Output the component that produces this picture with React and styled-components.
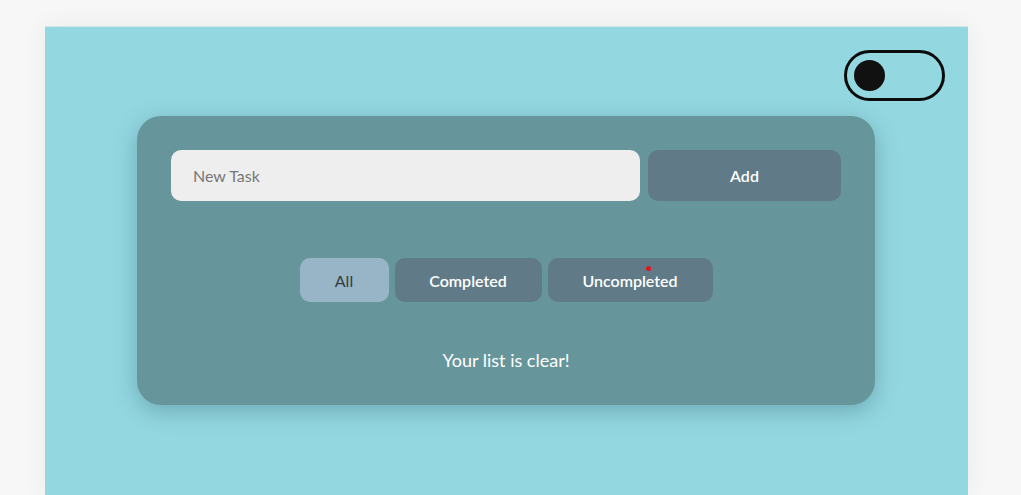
import React, { useState } from 'react'
import styled, { createGlobalStyle } from 'styled-components'

const GlobalStyle = createGlobalStyle`
  * {
    box-sizing: border-box;
  }
  body {
    margin: 0;
    background: #f7f7f7;
    font-family: Lato, 'Noto Sans', sans-serif;
  }
`

const Page = styled.main`
  width: 923px;
  min-height: 469px;
  margin: 26px 0 0 45px;
  background: #93d7e1;
  box-shadow: 0 0 24px rgba(0, 0, 0, 0.06);
  border-top: 1px solid #d4e6ea;
  display: flex;
  flex-direction: column;
`

const TopBar = styled.div`
  display: flex;
  justify-content: flex-end;
  padding: 23px 23px 0;
`

const Toggle = styled.button`
  width: 101px;
  height: 51px;
  border: 3px solid #0b0b0b;
  border-radius: 26px;
  background: transparent;
  padding: 0 0 0 7px;
  display: flex;
  align-items: center;
  justify-content: ${(p) => (p.$on ? 'flex-end' : 'flex-start')};
  cursor: pointer;
`

const Knob = styled.span`
  width: 31px;
  height: 31px;
  border-radius: 50%;
  background: #111;
`

const Card = styled.section`
  width: 738px;
  margin: 15px 0 0 92px;
  padding: 34px 34px 33px;
  background: #66969b;
  border-radius: 24px;
  box-shadow: 0 6px 22px rgba(40, 90, 100, 0.35);
  display: flex;
  flex-direction: column;
  align-items: center;
`

const Form = styled.form`
  align-self: stretch;
  display: flex;
  gap: 8px;
`

const Input = styled.input`
  width: 469px;
  height: 51px;
  border: none;
  border-radius: 10px;
  background: #eeeeee;
  padding: 0 22px;
  font-family: inherit;
  font-size: 16px;
  color: #333;
  outline: none;

  &::placeholder {
    color: #777;
  }
`

const Button = styled.button`
  width: ${(p) => (p.$w ? `${p.$w}px` : 'auto')};
  height: ${(p) => p.$h || 44}px;
  padding: 0;
  border: none;
  border-radius: 10px;
  background: ${(p) => (p.$active ? '#97b5c6' : '#607b87')};
  color: ${(p) => (p.$active ? '#333c40' : '#ffffff')};
  font-family: inherit;
  font-size: 16px;
  font-weight: ${(p) => (p.$active ? 400 : 600)};
  cursor: pointer;
  position: relative;
`

const AddButton = styled(Button)`
  flex: 1;
`

const Filters = styled.div`
  display: flex;
  gap: 6px;
  margin-top: 57px;
`

const Dot = styled.span`
  position: absolute;
  top: 8px;
  left: 98px;
  width: 5px;
  height: 5px;
  border-radius: 50%;
  background: #e0141e;
`

const Empty = styled.p`
  margin: 46px 0 0;
  line-height: 24px;
  font-size: 18px;
  color: #ffffff;
`

const filters = [
  { key: 'all', label: 'All', width: 89 },
  { key: 'completed', label: 'Completed', width: 147 },
  { key: 'uncompleted', label: 'Uncompleted', width: 165, dot: true },
]

export default function App() {
  const [dark, setDark] = useState(false)
  const [filter, setFilter] = useState('all')

  return (
    <>
      <GlobalStyle />
      <Page>
        <TopBar>
          <Toggle $on={dark} onClick={() => setDark(!dark)} aria-label="toggle theme">
            <Knob />
          </Toggle>
        </TopBar>
        <Card>
          <Form onSubmit={(e) => e.preventDefault()}>
            <Input placeholder="New Task" />
            <AddButton type="submit" $h={51}>Add</AddButton>
          </Form>
          <Filters>
            {filters.map((f) => (
              <Button
                key={f.key}
                $w={f.width}
                $active={filter === f.key}
                onClick={() => setFilter(f.key)}
              >
                {f.label}
                {f.dot && <Dot />}
              </Button>
            ))}
          </Filters>
          <Empty>Your list is clear!</Empty>
        </Card>
      </Page>
    </>
  )
}
